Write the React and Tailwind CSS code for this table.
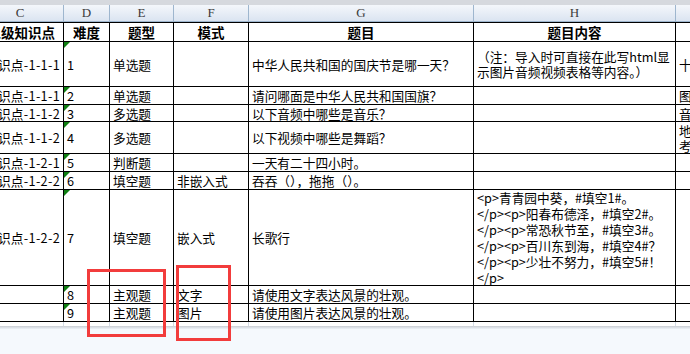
const W = [
  "w-[87px]",
  "w-[46px]",
  "w-[64px]",
  "w-[75px]",
  "w-[225px]",
  "w-[202px]",
  "w-[100px]",
];

const letters = ["C", "D", "E", "F", "G", "H", ""];

const titles = ["二级知识点", "难度", "题型", "模式", "题目", "题目内容", ""];

const rows = [
  {
    h: "h-[45px]",
    cells: [
      "知识点-1-1-1",
      "1",
      "单选题",
      "",
      "中华人民共和国的国庆节是哪一天？",
      ["（注：导入时可直接在此写html显", "示图片音频视频表格等内容。）"],
      "十",
    ],
  },
  { h: "h-[18px]", cells: ["知识点-1-1-1", "2", "单选题", "", "请问哪面是中华人民共和国国旗？", "", "图"] },
  { h: "h-[17px]", cells: ["知识点-1-1-2", "3", "多选题", "", "以下音频中哪些是音乐？", "", "音"] },
  { h: "h-[32px]", cells: ["知识点-1-1-2", "4", "多选题", "", "以下视频中哪些是舞蹈？", "", ["地", "考"]] },
  { h: "h-[18px]", cells: ["知识点-1-2-1", "5", "判断题", "", "一天有二十四小时。", "", ""] },
  { h: "h-[18px]", cells: ["知识点-1-2-2", "6", "填空题", "非嵌入式", "吞吞（），拖拖（）。", "", ""] },
  {
    h: "h-[96px]",
    cells: [
      "知识点-1-2-2",
      "7",
      "填空题",
      "嵌入式",
      "长歌行",
      [
        "<p>青青园中葵，#填空1#。",
        "</p><p>阳春布德泽，#填空2#。",
        "</p><p>常恐秋节至，#填空3#。",
        "</p><p>百川东到海，#填空4#？",
        "</p><p>少壮不努力，#填空5#！",
        "</p>",
      ],
      "",
    ],
  },
  { h: "h-[18px]", cells: ["", "8", "主观题", "文字", "请使用文字表达风景的壮观。", "", ""] },
  { h: "h-[18px]", cells: ["", "9", "主观题", "图片", "请使用图片表达风景的壮观。", "", ""] },
];

function Cell({ i, value, leading }) {
  const lines = Array.isArray(value) ? value : [value];
  return (
    <div
      className={`${W[i]} shrink-0 relative h-full border-r border-black flex flex-col justify-center overflow-hidden whitespace-nowrap ${
        i === 0 ? "items-end pr-[3px] tracking-[0.3px]" : "items-start pl-[3px]"
      }`}
    >
      {i === 1 && (
        <span className="absolute left-0 top-0 w-[6px] h-[6px] bg-[#0f7f12] [clip-path:polygon(0_0,100%_0,0_100%)]" />
      )}
      {lines.map((l, k) => (
        <span key={k} className={leading}>
          {l}
        </span>
      ))}
    </div>
  );
}

export default function App() {
  return (
    <div className="relative w-[690px] h-[354px] overflow-hidden bg-[#f5f9fd] text-black text-[12.7px] font-['Noto_Sans_CJK_SC','Noto_Sans',sans-serif] flex flex-col">
      <div className="h-[5px] shrink-0 bg-[#d6d9de]" />

      <div className="ml-[-23px] flex flex-col">
        {/* column letters */}
        <div className="flex h-[17px] border-b border-[#9eb6ce] bg-linear-to-b from-[#f4f7fb] to-[#dbe4f1]">
          {letters.map((l, i) => (
            <div
              key={i}
              className={`${W[i]} shrink-0 h-full border-r border-[#9eb6ce] flex items-center justify-center font-['Liberation_Serif',serif] text-[13px] text-[#3a3a3a]`}
            >
              {l}
            </div>
          ))}
        </div>

        {/* title row */}
        <div className="flex h-[20px] border-y border-black bg-white font-bold text-[13.5px]">
          {titles.map((t, i) => (
            <div
              key={i}
              className={`${W[i]} shrink-0 h-full border-r border-black flex items-center whitespace-nowrap overflow-hidden ${
                i === 0 ? "justify-end pr-[8px]" : "justify-center"
              }`}
            >
              {t}
            </div>
          ))}
        </div>

        {/* data rows */}
        {rows.map((r, ri) => (
          <div key={ri} className={`flex ${r.h} border-b border-black bg-white`}>
            {r.cells.map((c, i) => (
              <Cell
                key={i}
                i={i}
                value={c}
                leading={ri === 6 ? "leading-[16px]" : "leading-[15px]"}
              />
            ))}
          </div>
        ))}

        {/* fringe below the last row */}
        <div className="flex h-[4px] bg-white">
          {W.map((w, i) => (
            <div key={i} className={`${w} shrink-0 h-full border-r border-[#d3dae5]`} />
          ))}
        </div>
        <div className="h-[3px] bg-linear-to-b from-[#c9cdd3] to-[#eef3f9]" />
      </div>

      {/* red highlight boxes */}
      <div className="absolute left-[87px] top-[269px] w-[79px] h-[68px] border-[3px] border-[#f23c3c]" />
      <div className="absolute left-[176px] top-[265px] w-[55px] h-[76px] border-[3px] border-[#f23c3c]" />
    </div>
  );
}
